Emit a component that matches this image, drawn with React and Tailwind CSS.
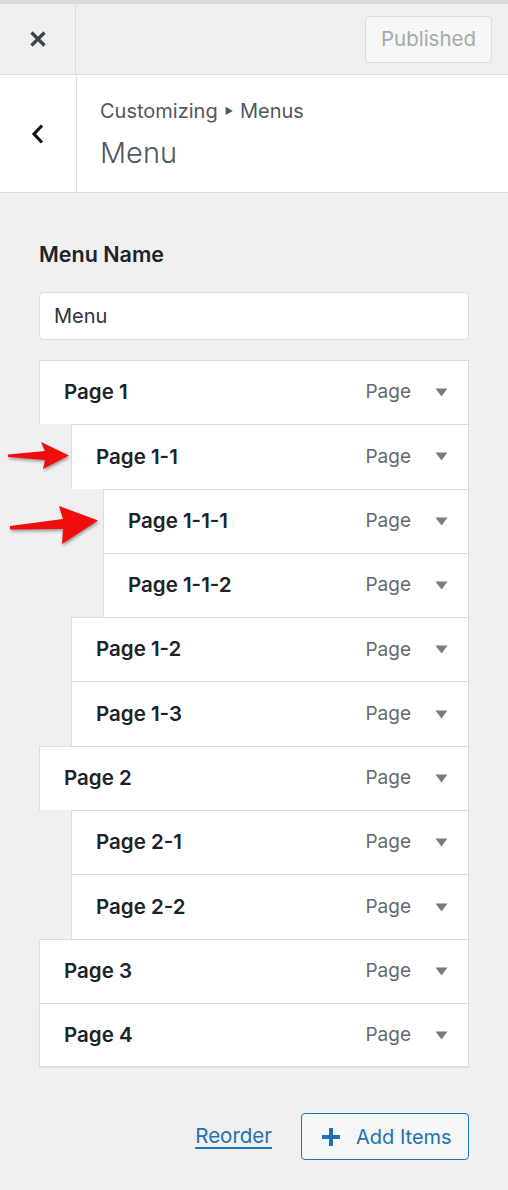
import React from "react";

const items = [
  { t: "Page 1", l: 0 },
  { t: "Page 1-1", l: 1 },
  { t: "Page 1-1-1", l: 2 },
  { t: "Page 1-1-2", l: 2 },
  { t: "Page 1-2", l: 1 },
  { t: "Page 1-3", l: 1 },
  { t: "Page 2", l: 0 },
  { t: "Page 2-1", l: 1 },
  { t: "Page 2-2", l: 1 },
  { t: "Page 3", l: 0 },
  { t: "Page 4", l: 0 },
];

const indent = ["ml-0", "ml-[32px]", "ml-[64px]"];

function Tri() {
  return (
    <svg width="13" height="9" viewBox="0 0 13 9" className="shrink-0">
      <path d="M0.5 0.5 H12.5 L6.5 8.5 Z" fill="#787c82" />
    </svg>
  );
}

export default function App() {
  return (
    <div
      className="relative w-[508px] min-h-[1190px] bg-[#f0f0f1]"
      style={{ fontFamily: "Inter, 'Noto Sans', sans-serif" }}
    >
      <div className="h-[4px] bg-[#dcdcde]" />
      <div className="flex h-[71px] border-b border-[#dcdcde] bg-[#f0f0f1]">
        <div className="flex w-[76px] items-center justify-center border-r border-[#dcdcde]">
          <svg width="18" height="18" viewBox="0 0 18 18">
            <path d="M2.5 2.5 L15.5 15.5 M15.5 2.5 L2.5 15.5" stroke="#3c434a" strokeWidth="3.2" strokeLinecap="butt" />
          </svg>
        </div>
        <div className="flex flex-1 items-center justify-end pr-[16px]">
          <div className="flex h-[47px] w-[127px] items-center justify-center rounded-[4px] border border-[#dcdcde] bg-[#f6f7f7] text-[20.5px] text-[#a7aaad]">
            Published
          </div>
        </div>
      </div>
      <div className="flex h-[118px] border-b border-[#dcdcde] bg-white">
        <div className="flex w-[77px] items-center justify-center border-r border-[#dcdcde]">
          <svg width="14" height="22" viewBox="0 0 14 22">
            <path d="M11 2.5 L3 11 L11 19.5" stroke="#101517" strokeWidth="3.2" fill="none" />
          </svg>
        </div>
        <div className="flex flex-col pl-[23px] pt-[23px]">
          <div className="flex items-center text-[20px] leading-[26px] text-[#50575e]">
            <span>Customizing</span>
            <span className="mx-[7px] text-[9px]">▶</span>
            <span>Menus</span>
          </div>
          <div className="mt-[11px] text-[29px] font-light leading-[36px] text-[#50575e]">Menu</div>
        </div>
      </div>

      <div className="px-[39px]">
        <div className="pt-[49px] text-[21.5px] font-semibold leading-[24px] text-[#1d2327]">Menu Name</div>
        <div className="mt-[26px] flex h-[48px] items-center rounded-[4px] border border-[#dcdcde] bg-white px-[14px] text-[20px] text-[#2c3338]">
          Menu
        </div>

        <div className="mt-[20px] flex flex-col">
          {items.map((it, i) => (
            <div
              key={i}
              className={`${indent[it.l]} flex h-[64.3px] items-center border-x border-t border-[#dcdcde] bg-white pl-[24px] pr-[20px] ${
                i === items.length - 1 ? "border-b shadow-[0_1px_1px_rgba(0,0,0,0.04)]" : ""
              }`}
            >
              <span className="flex-1 text-[20.5px] font-semibold text-[#1d2327]">{it.t}</span>
              <span className="mr-[24px] text-[19px] text-[#646970]">Page</span>
              <Tri />
            </div>
          ))}
        </div>

        <div className="mt-[46px] flex items-center justify-end gap-[29px]">
          <a className="text-[20.5px] text-[#2271b1] underline underline-offset-[4px]">Reorder</a>
          <div className="flex h-[47px] w-[168px] items-center rounded-[4px] border border-[#2271b1] bg-[#f6f7f7] pl-[19px] text-[20px] text-[#2271b1]">
            <svg width="20" height="20" viewBox="0 0 20 20" className="mr-[15px]">
              <path d="M10 1 V19 M1 10 H19" stroke="#2271b1" strokeWidth="4" />
            </svg>
            Add Items
          </div>
        </div>
      </div>

      <svg
        className="absolute left-0 top-[430px]"
        width="110"
        height="130"
        viewBox="0 0 110 130"
        style={{ filter: "drop-shadow(1px 2px 1.5px rgba(0,0,0,0.35))" }}
      >
        <path d="M8 24.5 L45 21 L41 12 L69 25.5 L43 39 L45 30 L8 27 Z" fill="#f20d0d" />
        <path d="M10 96 L63 89 L59 76 L98 90.5 L62 114 L63 99 L10 99.5 Z" fill="#f20d0d" />
      </svg>
    </div>
  );
}
